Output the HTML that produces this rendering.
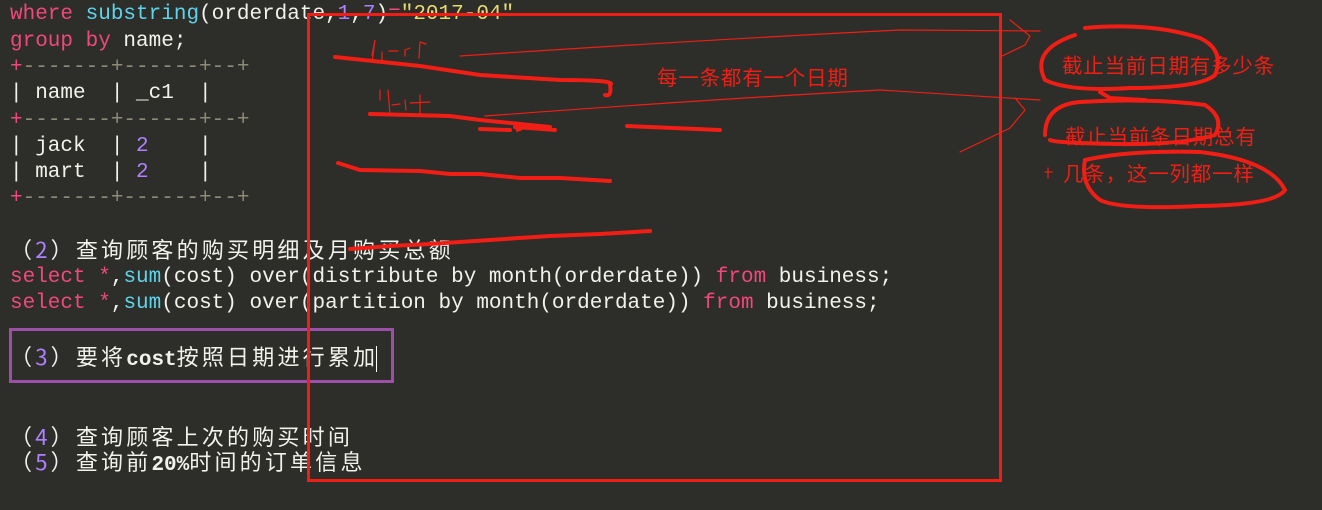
<!DOCTYPE html>
<html><head><meta charset="utf-8"><style>
body{margin:0;width:1322px;height:510px;background:#2d2d29;overflow:hidden;position:relative;font-family:"Liberation Mono","Noto Sans CJK SC",monospace;font-size:21px;color:#f2f2ec}
.l{position:absolute;left:10px;white-space:pre;line-height:26px}
.k{color:#f0487e}.f{color:#5fd3ea}.n{color:#ae81ff}.s{color:#e6db74}.g{color:#8d8a78}
.c{font-family:"Noto Sans CJK SC",sans-serif;font-size:22px;letter-spacing:3.2px}
.c b{font-family:"Liberation Mono",monospace;letter-spacing:0;font-size:21px}
.a{font-family:"Noto Sans CJK SC",sans-serif;font-size:20.5px;letter-spacing:0.8px;position:absolute;color:#f01e14;white-space:nowrap}
</style></head><body>
<div class="l" style="top:2px"><span class="k">where</span> <span class="f">substring</span>(orderdate,<span class="n">1</span>,<span class="n">7</span>)<span class="k">=</span><span class="s">"2017-04"</span></div>
<div class="l" style="top:29px"><span class="k">group by</span> name;</div>
<div class="l" style="top:55px"><span class="k">+</span><span class="g">-------+------+--+</span></div>
<div class="l" style="top:81px">| name  | _c1  |</div>
<div class="l" style="top:108px"><span class="k">+</span><span class="g">-------+------+--+</span></div>
<div class="l" style="top:134px">| jack  | <span class="n">2</span>    |</div>
<div class="l" style="top:160px">| mart  | <span class="n">2</span>    |</div>
<div class="l" style="top:186px"><span class="k">+</span><span class="g">-------+------+--+</span></div>
<div class="l c" style="top:236px">（<span class="n">2</span>）查询顾客的购买明细及月购买总额</div>
<div class="l" style="top:265px"><span class="k">select</span> <span class="k">*</span>,<span class="f">sum</span>(cost) over(distribute by month(orderdate)) <span class="k">from</span> business;</div>
<div class="l" style="top:291px"><span class="k">select</span> <span class="k">*</span>,<span class="f">sum</span>(cost) over(partition by month(orderdate)) <span class="k">from</span> business;</div>
<div class="l c" style="top:343px">（<span class="n">3</span>）要将<b>cost</b>按照日期进行累加</div>
<div style="position:absolute;left:376px;top:346px;width:1px;height:26px;background:#fff"></div>
<div class="l c" style="top:423px">（<span class="n">4</span>）查询顾客上次的购买时间</div>
<div class="l c" style="top:448px">（<span class="n">5</span>）查询前<b>20%</b>时间的订单信息</div>
<div style="position:absolute;left:9px;top:328px;width:379px;height:49px;border:3px solid #9b4fa6"></div>
<div style="position:absolute;left:307px;top:13px;width:689px;height:463px;border:3px solid #f01e14"></div>
<svg width="1322" height="510" style="position:absolute;left:0;top:0" fill="none" stroke="#f01e14" stroke-linecap="round">
<g stroke-width="4">
<path d="M335 57 L420 66 L480 75 L560 80 Q618 80 610 85 Q612 97 605 95"/>
<path d="M370 114 L450 116 L480 120 L520 124 L550 127 M520 129 L516 130 L520 128 L515 127 M480 129 L510 130 M555 130 L516 127"/>
<path d="M338 163 L360 170 L420 171 L450 174 L480 174 L520 178 L560 178 L610 181"/>
<path d="M350 249 L390 246 L430 244 L490 240 L550 236 L600 234 L650 231"/>
<path d="M627 126 L720 130"/>
<path d="M1075 35 Q1030 50 1045 80 Q1070 92 1130 88 Q1200 88 1215 75 Q1225 50 1200 38 Q1150 22 1085 28"/>
<path d="M1100 92 L1110 98 L1145 100"/>
<path d="M1045 135 Q1045 105 1080 102 Q1150 98 1205 105 Q1225 118 1215 135 Q1180 145 1120 144 Q1055 143 1050 140"/>
<path d="M1085 160 Q1130 150 1200 152 Q1270 160 1285 190 Q1275 205 1200 206 Q1120 210 1100 200 Q1080 185 1085 160"/>
</g>
<g stroke-width="1.2">
<path d="M460 56 Q700 40 900 30 L1040 31 M1010 20 L1030 36 L1025 45 L1000 57"/>
<path d="M485 116 Q700 100 880 90 L1040 100 M1015 98 L1025 110 L1010 128 L960 152"/>
<path d="M372 55 L375 40 L372 62 M382 52 L382 63 M389 51 L398 51 M405 56 L405 50 L410 48 M419 58 L420 42 L426 44"/>
<path d="M380 90 L380 100 M388 90 L390 115 M392 105 L400 104 M405 100 L406 110 M410 103 L430 102 M420 95 L420 115"/>
<path d="M1045 172 L1052 172 M1048 168 L1048 178"/>
</g>
</svg>
<div class="a" style="left:657px;top:61px">每一条都有一个日期</div>
<div class="a" style="left:1062px;top:49px">截止当前日期有多少条</div>
<div class="a" style="left:1065px;top:120px">截止当前条日期总有</div>
<div class="a" style="left:1063px;top:157px">几条，这一列都一样</div>
</body></html>
